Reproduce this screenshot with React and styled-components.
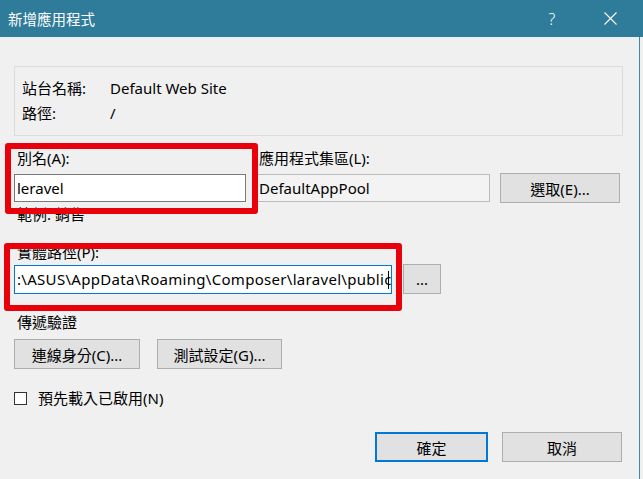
import React from "react";
import styled, { createGlobalStyle } from "styled-components";

const GlobalStyle = createGlobalStyle`
  html, body {
    margin: 0;
    padding: 0;
    background: #f0f0f0;
  }
  body {
    font-family: "Noto Sans", "Noto Sans CJK TC", sans-serif;
    color: #000;
  }
`;

const Window = styled.div`
  width: 643px;
  height: 479px;
  display: flex;
  flex-direction: column;
  background: #f0f0f0;
  overflow: hidden;
`;

const TitleBar = styled.div`
  height: 37px;
  flex-shrink: 0;
  display: flex;
  align-items: center;
  padding: 0 4px 0 8px;
  background: #2e7b9a;
  color: #fff;
  font-size: 14.5px;
`;

const Title = styled.span`
  flex: 1;
`;

const TitleButton = styled.div`
  width: 58px;
  height: 37px;
  display: flex;
  align-items: center;
  justify-content: center;
  font-size: 16px;
  font-weight: 300;
`;

const Body = styled.div`
  position: relative;
  flex: 1;
  margin-right: 3px;
  padding-left: 14px;
  border-right: 1px solid #3f88a6;
  font-size: 15px;
`;

const InfoBox = styled.div`
  box-sizing: border-box;
  width: 609px;
  height: 70px;
  margin-top: 29px;
  padding: 12px 0 0 7px;
  border: 1px solid #dcdcdc;
  display: grid;
  grid-template-columns: 88px auto;
  grid-auto-rows: 18px;
  row-gap: 7px;
  line-height: 18px;
`;

const FieldGrid = styled.div`
  display: grid;
  grid-template-columns: 232px 234px 120px;
  grid-template-rows: 18px 28px;
  column-gap: 10px;
  row-gap: 7px;
  margin-top: 13px;
  line-height: 18px;
`;

const Label = styled.div`
  line-height: 18px;
  margin-top: ${(p) => p.$top || 0}px;
  padding-left: 3px;
`;

const TextBox = styled.div`
  box-sizing: border-box;
  position: relative;
  height: ${(p) => p.$h || 28}px;
  width: ${(p) => (p.$w ? `${p.$w}px` : "auto")};
  display: flex;
  align-items: center;
  padding: 0 2px;
  background: ${(p) => (p.$readOnly ? "#f3f3f3" : "#fff")};
  border: 1px solid ${(p) => (p.$focus ? "#0078d7" : p.$readOnly ? "#bcbcbc" : "#7a7a7a")};
  white-space: nowrap;
  overflow: hidden;
  font-size: 15px;
  letter-spacing: ${(p) => (p.$focus ? "0.3px" : "normal")};
`;

const Caret = styled.span`
  position: absolute;
  right: 2px;
  top: 5px;
  width: 1px;
  height: 18px;
  background: #000;
`;

const Button = styled.button`
  box-sizing: border-box;
  width: ${(p) => p.$w}px;
  height: 30px;
  margin: 0;
  padding: 0;
  background: #e1e1e1;
  border: ${(p) => (p.$primary ? "2px solid #0078d7" : "1px solid #adadad")};
  font-family: inherit;
  font-size: 15px;
  color: #000;
  align-self: center;
`;

const Hint = styled.div`
  margin-top: 3px;
  padding-left: 3px;
  line-height: 18px;
`;

const PathRow = styled.div`
  display: flex;
  align-items: center;
  gap: 11px;
  margin-top: 3px;
`;

const ButtonRow = styled.div`
  display: flex;
  gap: ${(p) => p.$gap}px;
  margin-top: ${(p) => p.$top}px;
  justify-content: ${(p) => (p.$end ? "flex-end" : "flex-start")};
  padding-right: ${(p) => (p.$end ? 17 : 0)}px;
`;

const CheckRow = styled.label`
  display: flex;
  align-items: center;
  gap: 11px;
  height: 16px;
  margin-top: 21px;
  line-height: 16px;
`;

const CheckBox = styled.span`
  box-sizing: border-box;
  width: 13px;
  height: 13px;
  background: #fff;
  border: 1px solid #333;
`;

const Highlight = styled.div`
  position: absolute;
  box-sizing: border-box;
  left: ${(p) => p.$x}px;
  top: ${(p) => p.$y}px;
  width: ${(p) => p.$w}px;
  height: ${(p) => p.$h}px;
  border: 6px solid #e8000b;
  border-radius: 3px;
  pointer-events: none;
`;

export default function App() {
  return (
    <Window>
      <GlobalStyle />
      <TitleBar>
        <Title>新增應用程式</Title>
        <TitleButton>?</TitleButton>
        <TitleButton>
          <svg width="13" height="13" viewBox="0 0 13 13">
            <path d="M0.5 0.5 L12.5 12.5 M12.5 0.5 L0.5 12.5" stroke="#fff" strokeWidth="1.1" />
          </svg>
        </TitleButton>
      </TitleBar>
      <Body>
        <InfoBox>
          <span>站台名稱:</span>
          <span>Default Web Site</span>
          <span>路徑:</span>
          <span>/</span>
        </InfoBox>

        <FieldGrid>
          <Label>別名(A):</Label>
          <Label>應用程式集區(L):</Label>
          <span />
          <TextBox>leravel</TextBox>
          <TextBox $readOnly>DefaultAppPool</TextBox>
          <Button $w={120}>選取(E)...</Button>
        </FieldGrid>

        <Hint>範例: 銷售</Hint>

        <Label $top={20}>實體路徑(P):</Label>
        <PathRow>
          <TextBox $focus $w={378} $h={29}>
            :\ASUS\AppData\Roaming\Composer\laravel\public
            <Caret />
          </TextBox>
          <Button $w={38}>...</Button>
        </PathRow>

        <Label $top={19}>傳遞驗證</Label>
        <ButtonRow $gap={17} $top={8}>
          <Button $w={126}>連線身分(C)...</Button>
          <Button $w={125}>測試設定(G)...</Button>
        </ButtonRow>

        <CheckRow>
          <CheckBox />
          <span>預先載入已啟用(N)</span>
        </CheckRow>

        <ButtonRow $gap={14} $top={26} $end>
          <Button $w={113} $primary>確定</Button>
          <Button $w={120}>取消</Button>
        </ButtonRow>

        <Highlight $x={5} $y={106} $w={253} $h={71} />
        <Highlight $x={4} $y={206} $w={398} $h={68} />
      </Body>
    </Window>
  );
}
